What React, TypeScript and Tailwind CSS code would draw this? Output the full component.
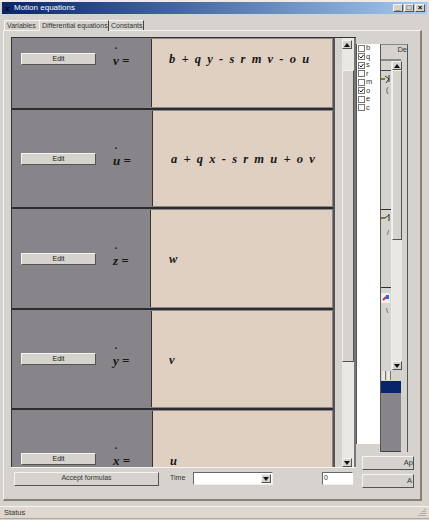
import React from 'react';

const equations = [
  { name: 'v', height: 'h-[72px]', left: 'w-[139px]', top: 'pt-[11px]', formula: 'b + q y - s r m v - o u', pad: 'pl-[17px]', fTop: 'pt-[12px]' },
  { name: 'u', height: 'h-[99px]', left: 'w-[140px]', top: 'pt-[39px]', formula: 'a + q x - s r m u + o v', pad: 'pl-[18px]', fTop: 'pt-[40px]' },
  { name: 'z', height: 'h-[101px]', left: 'w-[138px]', top: 'pt-[40px]', formula: 'w', pad: 'pl-[18px]', fTop: 'pt-[41px]' },
  { name: 'y', height: 'h-[100px]', left: 'w-[139px]', top: 'pt-[39px]', formula: 'v', pad: 'pl-[17px]', fTop: 'pt-[41px]' },
  { name: 'x', height: 'h-[100px]', left: 'w-[140px]', top: 'pt-[39px]', formula: 'u', pad: 'pl-[17px]', fTop: 'pt-[42px]' },
];

const checks = [
  { label: 'b', on: false },
  { label: 'q', on: true },
  { label: 's', on: true },
  { label: 'r', on: false },
  { label: 'm', on: false },
  { label: 'o', on: true },
  { label: 'e', on: false },
  { label: 'c', on: false },
];

const raised = 'border border-t-[#f4f3f0] border-l-[#f4f3f0] border-r-[#55534f] border-b-[#55534f]';

const Arrow = ({ down }: { down?: boolean }) => (
  <div className={`h-[9px] w-[10px] shrink-0 bg-[#d6d3ce] flex items-center justify-center ${raised}`}>
    <svg width="6" height="4" viewBox="0 0 6 4">
      <path d={down ? 'M0 0h6L3 4z' : 'M0 4h6L3 0z'} fill="#111" />
    </svg>
  </div>
);

const EquationRow = ({ eq }: { eq: (typeof equations)[number] }) => (
  <div className={`${eq.height} shrink-0 flex border-b-2 border-[#2c2b2e] bg-[#87848a]`}>
    <div className={`${eq.left} ${eq.top} shrink-0 pl-[9px] flex`}>
      <button className={`h-[12px] w-[75px] mt-[4px] bg-[#d6d3ce] text-[7px] leading-[10px] text-[#222] font-['Liberation_Sans',sans-serif] ${raised}`}>
        Edit
      </button>
      <div className="ml-[17px] -mt-[6px] font-['Liberation_Serif',serif] font-bold italic text-[13px] leading-[13px] text-[#161616]">
        <div className="pl-[2px] h-[9px] leading-[6px] text-[10px]">.</div>
        <div className="whitespace-pre mt-[2px]">{eq.name} =</div>
      </div>
    </div>
    <div className={`flex-1 my-[1px] mr-[1px] border-l border-[#333] bg-[#dfd0c2] ${eq.pad} ${eq.fTop} font-['Liberation_Serif',serif] font-bold italic text-[12.5px] leading-[16px] tracking-[0.8px] [word-spacing:1.5px] whitespace-pre text-[#161616]`}>
      {eq.formula}
    </div>
  </div>
);

export default function App() {
  return (
    <div className="h-[520px] w-[429px] overflow-hidden bg-[#d6d3ce] flex flex-col font-['Liberation_Sans',sans-serif] text-[#333]">
      <div className="h-[2px] shrink-0 bg-[#eeece8]" />
      <div className="h-[12px] mx-[2px] shrink-0 flex items-center bg-gradient-to-r from-[#0a246a] to-[#a6caf0] pl-[3px] pr-[2px]">
        <span className="w-[8px] font-['Liberation_Serif',serif] italic font-bold text-[9px] leading-[10px] text-black">x</span>
        <span className="ml-[1px] text-[8px] text-white">Motion equations</span>
        <div className="ml-auto flex gap-[1px]">
          {['_', '□', '×'].map((g) => (
            <div key={g} className={`w-[10px] h-[8px] bg-[#d6d3ce] text-[8px] leading-[6px] text-center text-black font-bold ${raised}`}>{g}</div>
          ))}
        </div>
      </div>

      <div className="h-[16px] shrink-0 pl-[4px] flex items-end text-[7px] leading-[9px]">
        <div className="h-[10px] w-[35px] px-[2px] border-t border-l border-[#f4f3f0]">Variables</div>
        <div className="h-[11px] w-[70px] px-[2px] bg-[#d6d3ce] border-t border-l border-r border-[#f4f3f0] border-r-[#444] relative top-[1px] whitespace-nowrap">Differential equations</div>
        <div className="h-[10px] w-[35px] px-[2px] border-t border-r border-[#f4f3f0] border-r-[#444]">Constants</div>
      </div>

      <div className="ml-[3px] w-[419px] h-[471px] shrink-0 border-t border-l border-[#f4f3f0] border-r-2 border-b-2 border-r-[#85827c] border-b-[#85827c] flex pl-[7px] pt-[6px]">
        <div className="w-[345px] shrink-0 flex flex-col">
          <div className="h-[430px] shrink-0 flex border-t border-l border-[#333]">
            <div className="w-[321px] overflow-hidden flex flex-col">
              {equations.map((eq) => (
                <EquationRow key={eq.name} eq={eq} />
              ))}
            </div>
            <div className="w-[9px] shrink-0 bg-[#d6d3ce] border-l-2 border-[#555]" />
            <div className="w-[14px] shrink-0 pt-[2px] flex flex-col border-r-2 border-[#777] bg-[#e9e8e5]">
              <Arrow />
              <div className="h-[21px] shrink-0" />
              <div className={`h-[292px] shrink-0 bg-[#d6d3ce] ${raised}`} />
              <div className="flex-1" />
              <Arrow down />
            </div>
          </div>
          <div className="h-px bg-[#f4f3f0]" />
          <div className="flex items-center h-[19px] mt-[1px] pl-[3px] text-[7px]">
            <button className={`h-[14px] w-[145px] bg-[#d6d3ce] ${raised}`}>Accept formulas</button>
            <span className="ml-[11px] w-[23px]">Time</span>
            <div className="h-[13px] w-[80px] bg-white border border-t-[#666] border-l-[#666] border-r-[#eee] border-b-[#eee] flex justify-end items-center pr-px">
              <Arrow down />
            </div>
            <div className="ml-[49px] h-[13px] w-[31px] bg-white border border-t-[#666] border-l-[#666] border-r-transparent border-b-[#eee] text-[7px] leading-[10px] pl-px">0</div>
          </div>
        </div>

        <div className="w-[65px] shrink-0 flex flex-col pt-[7px]">
          <div className="h-[408px] shrink-0 flex">
            <div className="w-[24px] shrink-0">
              <div className="h-[400px] bg-white border-l border-[#555] pl-px text-[7.5px] leading-[8.5px]">
                {checks.map((c) => (
                  <div key={c.label} className="flex items-center h-[8.5px] gap-[1px]">
                    <div className="h-[7px] w-[7px] border border-[#777] bg-white flex items-center justify-center">
                      {c.on && (
                        <svg width="5" height="5" viewBox="0 0 5 5">
                          <path d="M0.5 2.5l1.5 1.5L4.5 1" stroke="#111" fill="none" strokeWidth="1" />
                        </svg>
                      )}
                    </div>
                    <span>{c.label}</span>
                  </div>
                ))}
              </div>
            </div>
            <div className="w-[28px] shrink-0 border-t border-l border-r border-[#555] border-t-[#888] flex flex-col">
              <div className="h-[14px] shrink-0 text-right text-[7.5px] leading-[10px] overflow-hidden whitespace-nowrap">De</div>
              <div className="w-[20px] h-[393px] flex flex-col border-t-2 border-[#888]">
                <div className="h-[309px] shrink-0 flex border-r-2 border-[#666]">
                  <div className="w-[10px] shrink-0 flex flex-col">
                    <div className="h-[10px] shrink-0 border-b border-[#444]" />
                    <div className="h-[139px] shrink-0 border-b border-[#333] pt-[3px]">
                      <svg width="10" height="10" viewBox="0 0 10 10">
                        <path d="M0 5h4" stroke="#7d7a2c" strokeWidth="2" />
                        <path d="M4 2l4 3-3 4M8 1v7" stroke="#333" fill="none" />
                      </svg>
                      <div className="pl-[5px] text-[7px] leading-[9px] mt-[1px]">(</div>
                    </div>
                    <div className="h-[78px] shrink-0 border-b border-[#333] pt-[3px]">
                      <svg width="10" height="10" viewBox="0 0 10 10">
                        <path d="M0 5h4" stroke="#7d7a2c" strokeWidth="2" />
                        <path d="M4 5l4-3M8 1v7" stroke="#333" fill="none" />
                      </svg>
                      <div className="pl-[6px] text-[7px] leading-[9px] mt-[5px]">/</div>
                    </div>
                    <div className="flex-1 pt-[5px]">
                      <svg width="10" height="10" viewBox="0 0 10 10">
                        <rect width="9" height="10" fill="#eee" />
                        <path d="M2 7l3-3" stroke="#c33" strokeWidth="2" />
                        <path d="M5 2h3v4H5z" fill="#36c" />
                      </svg>
                      <div className="pl-[5px] text-[7px] leading-[9px] mt-[3px]">\</div>
                    </div>
                  </div>
                  <div className="flex-1 flex flex-col bg-[#e9e8e5] border-l border-[#eee]">
                    <Arrow />
                    <div className={`h-[170px] shrink-0 bg-[#d6d3ce] ${raised}`} />
                    <div className="flex-1" />
                    <Arrow down />
                  </div>
                </div>
                <div className="h-[11px] shrink-0 flex items-center gap-[1px] pl-[1px]">
                  <div className="w-[4px] h-[9px] bg-[#e9e8e5] border-r border-[#777]" />
                  <div className="w-[4px] h-[9px] bg-[#e9e8e5] border-r border-[#777]" />
                </div>
                <div className="h-[12px] shrink-0 bg-[#0a246a]" />
                <div className="flex-1 bg-[#87848a] border-b border-[#444]" />
              </div>
            </div>
          </div>
          <div className="pl-[6px] pt-[4px] flex flex-col gap-[4px] text-[7.5px] leading-[12px]">
            <button className={`h-[14px] w-[52px] text-right bg-[#d6d3ce] overflow-hidden whitespace-nowrap ${raised}`}>Ap</button>
            <button className={`h-[14px] w-[52px] text-right pr-[1px] bg-[#d6d3ce] ${raised}`}>A</button>
          </div>
        </div>
      </div>

      <div className="h-[5px] shrink-0" />
      <div className="h-[13px] shrink-0 bg-[#dfd6cd] border-t border-[#f4f3f0] border-b border-b-[#aaa] flex items-center pl-[4px] pr-[3px] text-[7.5px]">
        <span>Status</span>
        <svg className="ml-auto" width="8" height="8" viewBox="0 0 8 8">
          <path d="M7 0v1M5 2v1M7 2v1M3 4v1M5 4v1M7 4v1M1 6v1M3 6v1M5 6v1M7 6v1" stroke="#888" />
        </svg>
      </div>
      <div className="flex-1" />
    </div>
  );
}
